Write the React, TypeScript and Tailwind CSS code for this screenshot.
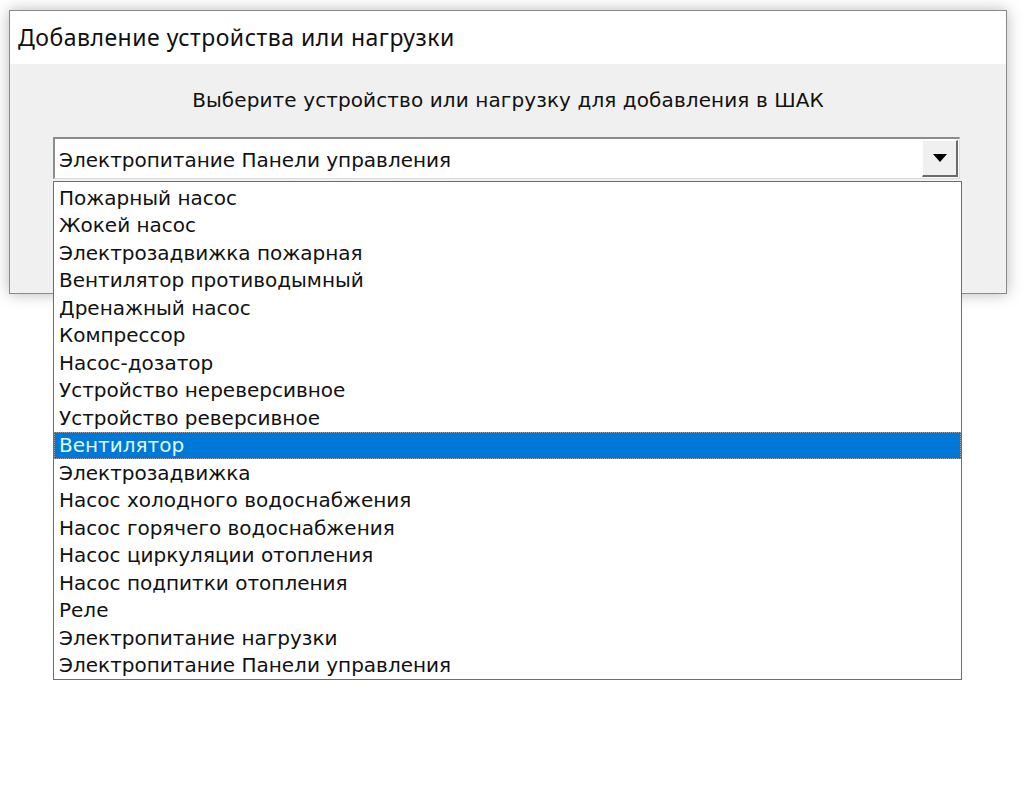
import React from "react";

const items = [
  "Пожарный насос",
  "Жокей насос",
  "Электрозадвижка пожарная",
  "Вентилятор противодымный",
  "Дренажный насос",
  "Компрессор",
  "Насос-дозатор",
  "Устройство нереверсивное",
  "Устройство реверсивное",
  "Вентилятор",
  "Электрозадвижка",
  "Насос холодного водоснабжения",
  "Насос горячего водоснабжения",
  "Насос циркуляции отопления",
  "Насос подпитки отопления",
  "Реле",
  "Электропитание нагрузки",
  "Электропитание Панели управления",
];

export default function App() {
  return (
    <div className="relative w-[1024px] h-[791px] bg-white overflow-hidden font-['DejaVu_Sans',sans-serif]">
      <div className="pt-[10px] pl-[9px]">
        <div className="w-[998px] h-[284px] border border-[#8a8a8a] bg-[#f0f0f0] shadow-[0_0_14px_rgba(0,0,0,0.28)] flex flex-col">
          <div className="h-[53px] bg-white flex items-center pl-[8px] pb-[1px]">
            <span className="font-['Noto_Sans',sans-serif] text-[23px] text-[#101010] tracking-[0.5px]">
              Добавление устройства или нагрузки
            </span>
          </div>
          <div className="flex-1 flex flex-col">
            <div className="h-[73px] flex items-center justify-center pb-[2px]">
              <span className="text-[20px] text-[#111] tracking-[0.1px]">
                Выберите устройство или нагрузку для добавления в ШАК
              </span>
            </div>
            <div className="pl-[43px]">
              <div className="w-[907px] h-[42px] border-t-2 border-l-2 border-t-[#8c8c8c] border-l-[#8c8c8c] border-b border-r border-b-[#dcdcdc] border-r-[#dcdcdc] bg-white flex items-center justify-between">
                <span className="pl-[4px] pt-[2px] text-[20px] text-[#111]">
                  Электропитание Панели управления
                </span>
                <div className="w-[36px] h-[37px] mr-[1px] bg-[#f0f0f0] border-t border-l border-t-white border-l-white border-b-2 border-r-2 border-b-[#6a6a6a] border-r-[#6a6a6a] flex items-center justify-center">
                  <svg width="14" height="8" viewBox="0 0 14 8">
                    <path d="M0 0 H14 L7 8 Z" fill="#000" />
                  </svg>
                </div>
              </div>
            </div>
          </div>
        </div>
      </div>

      <div className="absolute left-[53px] top-[181px] w-[909px] h-[499px] bg-white border border-[#6e6e6e] pt-[2px]">
        {items.map((it, i) => {
          const sel = i === 9;
          return (
            <div
              key={i}
              className={
                sel
                  ? "h-[27.5px] flex items-center pl-[5px] bg-[#0078d7] text-[#dffcff] outline-1 outline-dotted outline-[#9aa4b0] -outline-offset-1 text-[20px]"
                  : "h-[27.5px] flex items-center pl-[5px] text-[#111] text-[20px]"
              }
            >
              {it}
            </div>
          );
        })}
      </div>
    </div>
  );
}
